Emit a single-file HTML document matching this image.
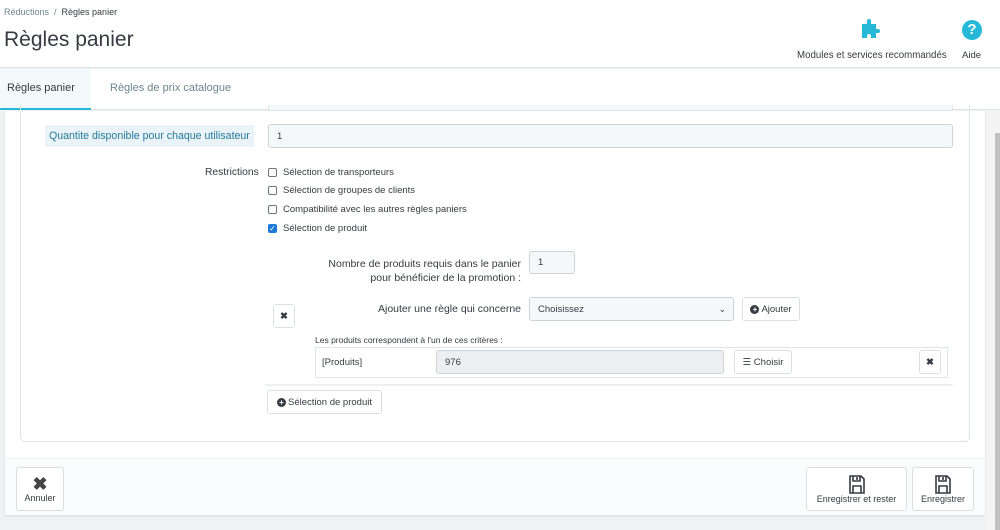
<!DOCTYPE html>
<html><head><meta charset="utf-8"><style>
*{box-sizing:border-box;margin:0;padding:0}
body{width:1000px;height:530px;overflow:hidden;background:#eff1f2;font-family:"Liberation Sans",sans-serif;color:#363a41;position:relative;font-size:10px}
.a{position:absolute}
.btn{position:absolute;background:#fff;border:1px solid #dcdfe2;border-radius:3px;color:#363a41;font-size:9.5px;display:flex;align-items:center;justify-content:center}
.inp{position:absolute;background:#f5f8f9;border:1px solid #c9d3d9;border-radius:3px;font-size:9.5px;padding-left:8px;display:flex;align-items:center}
.cb{position:absolute;width:9px;height:9px;border:1px solid #6c757d;border-radius:2px;background:#fff}
.lbl{position:absolute;font-size:9.5px;color:#363a41}
</style></head><body>
<div class="a" style="left:0;top:0;width:1000px;height:68px;background:#fff;border-bottom:1px solid #dfe3e6"></div>
<div class="a" style="left:4px;top:7px;font-size:9px;color:#6c868e">Réductions&nbsp; / &nbsp;<span style="color:#363a41">Règles panier</span></div>
<div class="a" style="left:4px;top:28px;font-size:21px;color:#363a41">Règles panier</div>
<svg class="a" style="left:862px;top:19px" width="22" height="20" viewBox="0 0 22 20"><path fill="#25b9d7" d="M0 5h5V2a2 2 0 1 1 4 0v3h5v5h2a2 2 0 1 1 0 4h-2v5H9v-2a2 2 0 1 0-4 0v2H0z"/></svg>
<div class="a" style="left:797px;top:50px;font-size:9.7px;color:#363a41">Modules et services recommandés</div>
<div class="a" style="left:962px;top:20px;width:20px;height:20px;border-radius:50%;background:#25b9d7;color:#fff;font-weight:bold;font-size:15px;text-align:center;line-height:20px">?</div>
<div class="a" style="left:962px;top:50px;font-size:9.5px">Aide</div>
<div class="a" style="left:0;top:69px;width:1000px;height:41px;background:#fff;border-bottom:1px solid #dfe3e6"></div>
<div class="a" style="left:0;top:69px;width:91px;height:41px;background:#f4f9fb;border-bottom:2px solid #25b9d7"></div>
<div class="a" style="left:7px;top:82px;font-size:11px">Règles panier</div>
<div class="a" style="left:110px;top:82px;font-size:11px;color:#6c868e">Règles de prix catalogue</div>
<div class="a" style="left:5px;top:111px;width:980px;height:404px;background:#fff;box-shadow:0 1px 2px rgba(0,0,0,.1)"></div>
<div class="a" style="left:20px;top:105px;width:950px;height:337px;border:1px solid #dbe6e9;border-top:none;border-radius:0 0 5px 5px"></div>
<div class="a" style="left:268px;top:105px;width:685px;height:6px;border:1px solid #dbe6e9;border-top:none;background:#f5f8f9"></div>
<div class="a" style="left:45px;top:125px;height:22px;padding:0 4px;background:#eaf4f8;color:#25799c;font-size:10.6px;line-height:22px">Quantite disponible pour chaque utilisateur</div>
<div class="inp" style="left:268px;top:124px;width:685px;height:24px">1</div>
<div class="lbl" style="left:205px;top:167px;font-size:10.3px">Restrictions</div>
<div class="cb" style="left:268px;top:168px"></div><div class="lbl" style="left:283px;top:167px">Sélection de transporteurs</div>
<div class="cb" style="left:268px;top:186px"></div><div class="lbl" style="left:283px;top:185px">Sélection de groupes de clients</div>
<div class="cb" style="left:268px;top:205px"></div><div class="lbl" style="left:283px;top:204px">Compatibilité avec les autres règles paniers</div>
<div class="cb" style="left:268px;top:224px;background:#1f7bd8;border-color:#1f7bd8;color:#fff;font-size:8px;line-height:8px;text-align:center">✓</div><div class="lbl" style="left:283px;top:223px">Sélection de produit</div>
<div class="lbl" style="left:300px;top:257px;width:221px;text-align:right;line-height:14px;font-size:10.5px">Nombre de produits requis dans le panier<br>pour bénéficier de la promotion :</div>
<div class="inp" style="left:529px;top:251px;width:46px;height:23px">1</div>
<div class="btn" style="left:273px;top:304px;width:22px;height:24px;font-weight:bold">✖</div>
<div class="lbl" style="left:300px;top:303px;width:221px;text-align:right;font-size:10.5px">Ajouter une règle qui concerne</div>
<div class="inp" style="left:529px;top:297px;width:205px;height:24px">Choisissez<span style="position:absolute;right:7px;font-size:9px">⌄</span></div>
<div class="btn" style="left:742px;top:297px;width:58px;height:24px"><b style="display:inline-block;width:9px;height:9px;border-radius:50%;background:#363a41;color:#fff;font-size:8px;line-height:9px;text-align:center;margin-right:2px">+</b>Ajouter</div>
<div class="lbl" style="left:315px;top:335px;font-size:8.5px">Les produits correspondent à l'un de ces critères :</div>
<div class="a" style="left:315px;top:347px;width:633px;height:31px;border:1px solid #dbe6e9"></div>
<div class="lbl" style="left:322px;top:357px">[Produits]</div>
<div class="inp" style="left:436px;top:350px;width:288px;height:24px;background:#eceeef;border-color:#c9d3d9">976</div>
<div class="btn" style="left:734px;top:350px;width:58px;height:24px">☰ Choisir</div>
<div class="btn" style="left:919px;top:350px;width:22px;height:24px;font-weight:bold">✖</div>
<div class="a" style="left:265px;top:384px;width:688px;height:2px;background:#eef1f3"></div>
<div class="btn" style="left:267px;top:390px;width:115px;height:24px"><b style="display:inline-block;width:9px;height:9px;border-radius:50%;background:#363a41;color:#fff;font-size:8px;line-height:9px;text-align:center;margin-right:2px">+</b>Sélection de produit</div>
<div class="a" style="left:5px;top:458px;width:980px;height:57px;background:#fafbfc;border-top:1px solid #eef0f2"></div>
<div class="btn" style="left:16px;top:467px;width:48px;height:44px;flex-direction:column;font-size:9px"><span style="font-size:18px;font-weight:bold;line-height:18px;color:#444">✖</span>Annuler</div>
<div class="btn" style="left:806px;top:467px;width:101px;height:44px;flex-direction:column;font-size:9px"><svg width="16" height="19" viewBox="0 0 16 19"><path d="M1 1h11l3 3v14H1z M4 1v5h7V1 M4 11h8v7H4z M8 2v3" fill="none" stroke="#363a41" stroke-width="1.6"/></svg>Enregistrer et rester</div>
<div class="btn" style="left:912px;top:467px;width:62px;height:44px;flex-direction:column;font-size:9px"><svg width="16" height="19" viewBox="0 0 16 19"><path d="M1 1h11l3 3v14H1z M4 1v5h7V1 M4 11h8v7H4z M8 2v3" fill="none" stroke="#363a41" stroke-width="1.6"/></svg>Enregistrer</div>
<div class="a" style="left:986px;top:111px;width:14px;height:419px;background:#f4f4f4"></div>
<div class="a" style="left:995px;top:133px;width:5px;height:397px;background:#c1c1c1"></div>
</body></html>
